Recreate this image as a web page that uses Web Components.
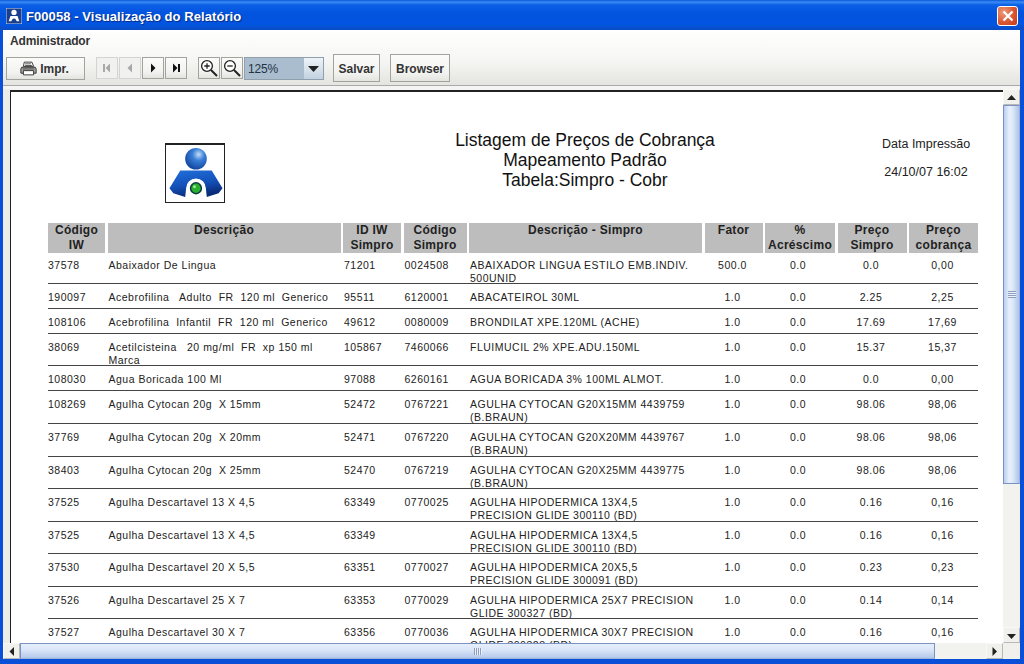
<!DOCTYPE html>
<html lang="pt">
<head>
<meta charset="utf-8">
<title>F00058</title>
<style>
  html, body { margin: 0; height: 100%; overflow: hidden; background: #0a4fd8; }
  body { font-family: "Liberation Sans", Arial, sans-serif; }
</style>
</head>
<body>
<report-window caption="F00058 - Visualização do Relatório">
  <report-toolbar slot="toolbar"></report-toolbar>
  <report-page></report-page>
</report-window>

<script>
const ICONS = {
  first: '<path d="M2 2h2v8H2zM9 1.5v9L4.5 6z"/>',
  prev: '<path d="M8 1.5v9L3.5 6z"/>',
  next: '<path d="M4 1.5v9L8.5 6z"/>',
  last: '<path d="M3 1.5v9L7.5 6zM8 2h2v8H8z"/>'
};

class ScrollArrow extends HTMLElement {
  constructor() {
    super();
    this.attachShadow({ mode: 'open' });
    const dir = this.getAttribute('dir') || 'up';
    const shapes = {
      up: 'M3 10h9L7.500 5z', down: 'M3 6h9L7.500 11z',
      left: 'M10 3v9L5.500 7.500z', right: 'M5.500 3v9l4.500-4.500z'
    };
    this.shadowRoot.innerHTML = `
      <style>
        :host { display: block; flex: none; width: 17px; height: 16px; background: #f0f0ec; box-sizing: border-box;
          border: 1px solid #b8b8b4; border-top-color: #f8f8f6; border-left-color: #f8f8f6; }
        svg { display: block; width: 15px; height: 14px; fill: #222; }
      </style>
      <svg viewBox="0 0 15 14"><path d="${shapes[dir]}"/></svg>`;
  }
}
customElements.define('scroll-arrow', ScrollArrow);

class ScrollBar extends HTMLElement {
  constructor() {
    super();
    this.attachShadow({ mode: 'open' });
    const vertical = this.getAttribute('orient') === 'vertical';
    this.shadowRoot.innerHTML = `
      <style>
        :host { display: flex; flex: none; background: #f0f0ec; box-sizing: border-box; }
        :host([orient="vertical"]) { flex-direction: column; width: 17px; }
        :host([orient="horizontal"]) { height: 16px; }
        .track { flex: 1; display: flex; min-width: 0; min-height: 0; }
        :host([orient="vertical"]) .track { flex-direction: column; }
        .thumb { flex: 1; display: flex; align-items: center; justify-content: center; box-sizing: border-box; }
        :host([orient="vertical"]) .thumb { border: 1px solid #7b93c4; border-right-color: #9db3d8;
          background: linear-gradient(90deg, #b9cdef, #e8f0fc 35%, #dce7f8 60%, #aec4e8); }
        :host([orient="horizontal"]) .thumb { border: 1px solid #7b93c4; border-bottom-color: #9db3d8;
          background: linear-gradient(180deg, #e6eefb, #dbe6f8 40%, #b3c8ea); }
        .grip { width: 8px; height: 7px; background: repeating-linear-gradient(180deg, #8c9dbd 0 1px, #eef3fb 1px 2px); }
        :host([orient="horizontal"]) .grip { background: repeating-linear-gradient(90deg, #8c9dbd 0 1px, #eef3fb 1px 2px); }
        .rest { flex: none; background: #f2f2ee; }
        :host([orient="vertical"]) .rest { height: 143px; }
        :host([orient="horizontal"]) .rest { width: 51px; }
      </style>
      <scroll-arrow dir="${vertical ? 'up' : 'left'}"></scroll-arrow>
      <div class="track"><div class="thumb"><div class="grip"></div></div><div class="rest"></div></div>
      <scroll-arrow dir="${vertical ? 'down' : 'right'}"></scroll-arrow>`;
  }
}
customElements.define('scroll-bar', ScrollBar);

class ToolButton extends HTMLElement {
  constructor() {
    super();
    this.attachShadow({ mode: 'open' });
    this.shadowRoot.innerHTML = `
      <style>
        :host { display: inline-flex; align-items: center; justify-content: center; box-sizing: border-box; height: 22px; gap: 3px;
          border: 1px solid #a3a39d; background: linear-gradient(180deg, #fbfbfa, #f2f2f0 70%, #e3e3df);
          font: bold 12px "Liberation Sans", Arial, sans-serif; color: #333; }
        :host([disabled]) { border-color: #d4d4d0; color: #aaa; background: #f1f1ef; }
        ::slotted(svg) { display: block; }
      </style>
      <slot></slot>`;
  }
}
customElements.define('tool-button', ToolButton);

class ReportToolbar extends HTMLElement {
  constructor() {
    super();
    this.attachShadow({ mode: 'open' });
    const nav = (k, off) => `<tool-button class="n" ${off ? 'disabled' : ''}><svg width="12" height="12" viewBox="0 0 12 12" fill="${off ? '#a8a8a8' : '#111'}">${ICONS[k]}</svg></tool-button>`;
    const zoom = (plus) => `<tool-button class="z"><svg width="20" height="20" viewBox="0 0 20 20">
        <circle cx="8" cy="8" r="5.4" fill="#fff" stroke="#222" stroke-width="1.3"/>
        <path d="M5.3 8h5.4${plus ? 'M8 5.3v5.4' : ''}" stroke="#222" stroke-width="1.3"/>
        <path d="M12 12l6 6" stroke="#222" stroke-width="2"/></svg></tool-button>`;
    this.shadowRoot.innerHTML = `
      <style>
        :host { display: block; box-sizing: border-box; height: 55px; padding: 4px 7px 0 7px;
          font-family: "Liberation Sans", Arial, sans-serif; color: #333; }
        .user { font: bold 12px "Liberation Sans", Arial, sans-serif; height: 23px; line-height: 15px; letter-spacing: -.15px; }
        .bar { display: flex; align-items: flex-start; margin: -3px 0 0 -4px; }
        .bar > * { flex: none; }
        .print { width: 79px; height: 23px; margin: 3px 11px 0 0; gap: 3px; padding-right: 2px; }
        .n { width: 22px; height: 22px; margin-top: 3px; margin-right: 1px; }
        .gap { margin-right: 11px; }
        .z { width: 22px; height: 22px; margin-top: 3px; margin-right: 1px; }
        .combo { display: flex; width: 80px; height: 23px; margin-top: 3px; margin-right: 9px; box-sizing: border-box;
          border: 1px solid #8fa0ac; }
        .combo span { flex: 1; background: #a9bdcf; font: 12px "Liberation Sans", Arial, sans-serif; letter-spacing: -.2px; line-height: 22px; padding-left: 3px; color: #234; }
        .combo b { width: 19px; background: linear-gradient(180deg, #eef3f8, #c3d2e0); display: flex; align-items: center; justify-content: center; }
        .s { width: 47px; height: 28px; padding-top: 1px; }
        .b { width: 60px; height: 28px; margin-left: 10px; padding-top: 1px; }
      </style>
      <div class="user">Administrador</div>
      <div class="bar">
        <tool-button class="print"><svg width="17" height="15" viewBox="0 0 20 17">
          <path d="M5 1h9l2 5H4z" fill="#fff" stroke="#222"/>
          <path d="M2 7h16l1 2v5H1V9z" fill="#a8a8a4" stroke="#222"/>
          <path d="M4 11h12v5H4z" fill="#fff" stroke="#222"/>
          <path d="M6 3h7M6 5h8M3 9h14" stroke="#444"/></svg>Impr.</tool-button>
        ${nav('first', 1)}${nav('prev', 1)}${nav('next')}<tool-button class="n gap"><svg width="12" height="12" viewBox="0 0 12 12" fill="#111">${ICONS.last}</svg></tool-button>
        ${zoom(true)}${zoom(false)}
        <div class="combo"><span>125%</span><b><svg width="11" height="6" viewBox="0 0 11 6"><path d="M0 0h11L5.500 6z" fill="#222"/></svg></b></div>
        <tool-button class="s">Salvar</tool-button>
        <tool-button class="b">Browser</tool-button>
      </div>`;
  }
}
customElements.define('report-toolbar', ReportToolbar);

class ReportWindow extends HTMLElement {
  constructor() {
    super();
    this.attachShadow({ mode: 'open' });
    this.shadowRoot.innerHTML = `
      <style>
        :host { display: flex; flex-direction: column; box-sizing: border-box; width: 1024px; height: 664px; overflow: hidden;
          background: #0a4fd8; font-family: "Liberation Sans", Arial, sans-serif; }
        .title { flex: none; box-sizing: border-box; height: 30px; display: flex; align-items: center; padding: 2px 6px 0 6px; gap: 4px;
          background: linear-gradient(180deg, #0a56d8 0, #3a8cf5 2px, #0a5fe6 5px, #0253de 14px, #0255e2 24px, #0a4cc4 30px);
          color: #fff; text-shadow: 1px 1px 1px #0a2a80; }
        .label { flex: 1; font: bold 13px "Liberation Sans", Arial, sans-serif; letter-spacing: .07px; }
        .close { width: 21px; height: 20px; box-sizing: border-box; border: 1px solid #fff; border-radius: 3px;
          background: radial-gradient(circle at 30% 30%, #ee9a7a, #d8532e 60%, #c23a1a); display: flex; align-items: center; justify-content: center; }
        .body { flex: 1; min-height: 0; margin: 0 4px 5px 3px; display: flex; flex-direction: column;
          background: linear-gradient(180deg, #fff, #f6f6f4 30px, #e4e4e0 55px); }
        .pane { flex: 1; min-height: 0; display: flex; flex-direction: column; border-top: 1px solid #aaa; background: #fff; }
        .mid { flex: 1; min-height: 0; display: flex; padding-top: 3px; background: #f4f4f2; }
        .gutter { flex: none; width: 7px; background: #ecece8; }
        .view { flex: 1; min-width: 0; overflow: hidden; background: #fff; border: solid #222; border-width: 2px 0 0 1px; margin-top: 1px; }
        .lower { display: flex; flex: none; }
        .lower scroll-bar { flex: 1; }
        .corner { flex: none; width: 17px; background: #f0f0ec; }
      </style>
      <div class="title">
        <svg width="16" height="16" viewBox="0 0 18 18">
          <rect width="18" height="18" fill="#1a3f8c" stroke="#dfe8f8"/>
          <circle cx="9" cy="5" r="3" fill="#fff"/>
          <path d="M3 15l2-6h8l2 6h-3l-1-2a2.200 2.200 0 0 0-4 0l-1 2z" fill="#fff"/>
        </svg>
        <span class="label">F00058 - Visualização do Relatório</span>
        <span class="close"><svg width="12" height="12" viewBox="0 0 12 12"><path d="M1.500 1.500l9 9M10.500 1.500l-9 9" stroke="#fff" stroke-width="2.200"/></svg></span>
      </div>
      <div class="body">
        <slot name="toolbar"></slot>
        <div class="pane">
          <div class="mid">
            <div class="gutter"></div>
            <div class="view"><slot></slot></div>
            <scroll-bar orient="vertical"></scroll-bar>
          </div>
          <div class="lower"><scroll-bar orient="horizontal"></scroll-bar><div class="corner"></div></div>
        </div>
      </div>`;
  }
}
customElements.define('report-window', ReportWindow);

const ROWS = [
  ['37578', 'Abaixador De Lingua', '71201', '0024508', 'ABAIXADOR LINGUA ESTILO EMB.INDIV.<br>500UNID', '500.0', '0.0', '0.0', '0,00', 32.5],
  ['190097', 'Acebrofilina &nbsp; Adulto &nbsp;FR &nbsp;120 ml &nbsp;Generico', '95511', '6120001', 'ABACATEIROL 30ML', '1.0', '0.0', '2.25', '2,25', 25],
  ['108106', 'Acebrofilina &nbsp;Infantil &nbsp;FR &nbsp;120 ml &nbsp;Generico', '49612', '0080009', 'BRONDILAT XPE.120ML (ACHE)', '1.0', '0.0', '17.69', '17,69', 25],
  ['38069', 'Acetilcisteina &nbsp; 20 mg/ml &nbsp;FR &nbsp;xp 150 ml<br>Marca', '105867', '7460066', 'FLUIMUCIL 2% XPE.ADU.150ML', '1.0', '0.0', '15.37', '15,37', 32],
  ['108030', 'Agua Boricada 100 Ml', '97088', '6260161', 'AGUA BORICADA 3% 100ML ALMOT.', '1.0', '0.0', '0.0', '0,00', 25],
  ['108269', 'Agulha Cytocan 20g &nbsp;X 15mm', '52472', '0767221', 'AGULHA CYTOCAN G20X15MM 4439759<br>(B.BRAUN)', '1.0', '0.0', '98.06', '98,06', 33],
  ['37769', 'Agulha Cytocan 20g &nbsp;X 20mm', '52471', '0767220', 'AGULHA CYTOCAN G20X20MM 4439767<br>(B.BRAUN)', '1.0', '0.0', '98.06', '98,06', 32.5],
  ['38403', 'Agulha Cytocan 20g &nbsp;X 25mm', '52470', '0767219', 'AGULHA CYTOCAN G20X25MM 4439775<br>(B.BRAUN)', '1.0', '0.0', '98.06', '98,06', 32.5],
  ['37525', 'Agulha Descartavel 13 X 4,5', '63349', '0770025', 'AGULHA HIPODERMICA 13X4,5<br>PRECISION GLIDE 300110 (BD)', '1.0', '0.0', '0.16', '0,16', 32.5],
  ['37525', 'Agulha Descartavel 13 X 4,5', '63349', '', 'AGULHA HIPODERMICA 13X4,5<br>PRECISION GLIDE 300110 (BD)', '1.0', '0.0', '0.16', '0,16', 32.5],
  ['37530', 'Agulha Descartavel 20 X 5,5', '63351', '0770027', 'AGULHA HIPODERMICA 20X5,5<br>PRECISION GLIDE 300091 (BD)', '1.0', '0.0', '0.23', '0,23', 32.5],
  ['37526', 'Agulha Descartavel 25 X 7', '63353', '0770029', 'AGULHA HIPODERMICA 25X7 PRECISION<br>GLIDE 300327 (BD)', '1.0', '0.0', '0.14', '0,14', 32.5],
  ['37527', 'Agulha Descartavel 30 X 7', '63356', '0770036', 'AGULHA HIPODERMICA 30X7 PRECISION<br>GLIDE 300328 (BD)', '1.0', '0.0', '0.16', '0,16', 32.5]
];
const HEADS = ['Código<br>IW', 'Descrição', 'ID IW<br>Simpro', 'Código<br>Simpro', 'Descrição - Simpro',
  'Fator', '%<br>Acréscimo', 'Preço<br>Simpro', 'Preço<br>cobrança'];
const COLS = '57px 233px 58px 63px 233px 58px 70px 69px 69px';

class ReportPage extends HTMLElement {
  constructor() {
    super();
    this.attachShadow({ mode: 'open' });
    const aligns = ['', '', '', '', '', 'c', 'c', 'c', 'c'];
    const rows = ROWS.map(r => `
      <div class="row" style="height:${r[9]}px">${r.slice(0, 9).map((v, i) => `<div class="${aligns[i]}">${v}</div>`).join('')}</div>`).join('');
    this.shadowRoot.innerHTML = `
      <style>
        :host { display: block; height: 560px; overflow: hidden; box-sizing: border-box; padding: 38.500px 0 0 37px; background: #fff;
          font-family: "Liberation Sans", Arial, sans-serif; color: #222; }
        .top { display: grid; grid-template-columns: 117px 60px 230px 260px 167px 88px; width: 930px; height: 92px; }
        .logo { grid-column: 2; width: 60px; height: 60px; margin-top: 12px; box-sizing: border-box; border: 1px solid #222; border-top-width: 2px; }
        .heading { grid-column: 4; text-align: center; font-size: 17.500px; line-height: 20px; margin-top: -1px; color: #111; white-space: nowrap; }
        .stamp { grid-column: 6; font-size: 12.500px; text-align: center; line-height: 15px; padding-top: 6px; white-space: nowrap; }
        .stamp div + div { margin-top: 13px; }
        .heads, .row { display: grid; grid-template-columns: ${COLS}; }
        .heads { column-gap: 2.500px; width: 930px; height: 29px; }
        .heads div { background: #bdbdbd; font: bold 12px/15px "Liberation Sans", Arial, sans-serif; text-align: center; letter-spacing: .3px; color: #222; }
        .row { column-gap: 2.500px; width: 930px; border-bottom: 1px solid #444; box-sizing: border-box; font-size: 10.500px; line-height: 13px; padding-top: 7px; overflow: hidden; }
        .row div { padding-left: 1px; letter-spacing: .5px; white-space: nowrap; }
        .row div:first-child { padding-left: 0; }
        .row .c { text-align: center; padding-left: 0; padding-right: 2px; }
        .row .c:nth-child(7) { padding-right: 4px; }
      </style>
      <div class="top">
        <svg class="logo" viewBox="0 0 58 58">
          <defs>
            <radialGradient id="h" cx=".62" cy=".3" r=".8"><stop offset="0" stop-color="#c4def6"/><stop offset=".35" stop-color="#3a80d8"/><stop offset="1" stop-color="#0a3a94"/></radialGradient>
            <linearGradient id="b" x1="0" y1="0" x2=".3" y2="1"><stop offset="0" stop-color="#2270dc"/><stop offset=".6" stop-color="#1450b8"/><stop offset="1" stop-color="#082c78"/></linearGradient>
          </defs>
          <circle cx="30" cy="14" r="11" fill="url(#h)"/>
          <path d="M14 26h32l11 18-4 5-12 4-1-9a10 10 0 0 0-20 0l-1 9-12-4-4-5z" fill="url(#b)"/>
          <path d="M21.500 53v-9a8.500 8.500 0 0 1 17 0v9" fill="none" stroke="#fff" stroke-width="2"/>
          <circle cx="30" cy="44" r="5.500" fill="#28b02e" stroke="#0a3a40" stroke-width="1.500"/>
          <circle cx="28.500" cy="42.500" r="1.500" fill="#9fe89f"/>
        </svg>
        <div class="heading">Listagem de Preços de Cobrança<br>Mapeamento Padrão<br>Tabela:Simpro - Cobr</div>
        <div class="stamp"><div>Data Impressão</div><div>24/10/07 16:02</div></div>
      </div>
      <div class="heads">${HEADS.map(h => `<div>${h}</div>`).join('')}</div>
      ${rows}`;
  }
}
customElements.define('report-page', ReportPage);
</script>
</body>
</html>
